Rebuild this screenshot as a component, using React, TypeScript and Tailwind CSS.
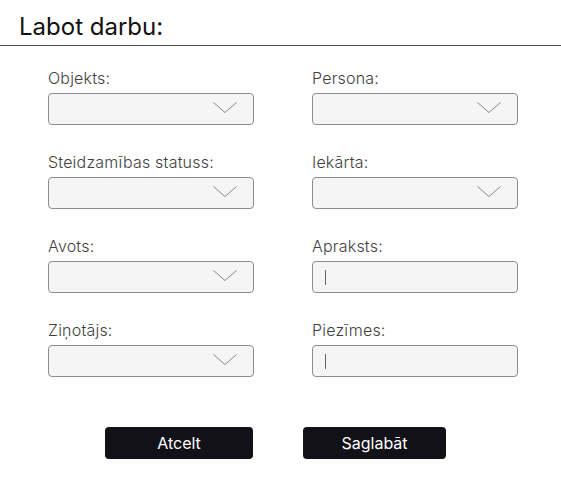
import React from 'react';

const fields = [
  { label: 'Objekts:', kind: 'select' },
  { label: 'Persona:', kind: 'select' },
  { label: 'Steidzamības statuss:', kind: 'select' },
  { label: 'Iekārta:', kind: 'select' },
  { label: 'Avots:', kind: 'select' },
  { label: 'Apraksts:', kind: 'text' },
  { label: 'Ziņotājs:', kind: 'select' },
  { label: 'Piezīmes:', kind: 'text' },
];

function Chevron() {
  return (
    <svg width="24" height="12" viewBox="0 0 24 12" className="mr-[16px] mt-[-2px]">
      <polyline points="0.5,0.5 12,10.5 23.5,0.5" fill="none" stroke="#7a7a7a" strokeWidth="0.9" />
    </svg>
  );
}

function Field({ label, kind }: { label: string; kind: string }) {
  return (
    <div className="flex flex-col">
      <label className="text-[16px] leading-[19px] font-light tracking-[0.2px] text-[#3f3f3f]">{label}</label>
      <div className="mt-[5px] h-[32px] w-[206px] rounded-[4px] border border-[#8c8c8c] bg-[#f5f5f5] flex items-center">
        {kind === 'select' ? (
          <div className="flex-1 flex justify-end">
            <Chevron />
          </div>
        ) : (
          <div className="ml-[12px] w-px h-[15px] bg-[#666]" />
        )}
      </div>
    </div>
  );
}

export default function App() {
  return (
    <div className="w-[561px] h-[490px] bg-white font-['Inter',sans-serif] text-[#111]">
      <div className="h-[46px] border-b border-[#4d4d4d]">
        <h1 className="pl-[19px] pt-[12px] text-[24px] leading-[29px] font-normal">Labot darbu:</h1>
      </div>

      <div className="grid grid-cols-[206px_206px] gap-x-[58px] gap-y-[28px] pl-[48px] pt-[23px]">
        {fields.map(f => (
          <Field key={f.label} label={f.label} kind={f.kind} />
        ))}
      </div>

      <div className="flex gap-[50px] pl-[105px] pt-[50px]">
        <button className="w-[148px] h-[32px] rounded-[4px] bg-[#111117] text-white text-[16px] font-normal">
          Atcelt
        </button>
        <button className="w-[143px] h-[32px] rounded-[4px] bg-[#111117] text-white text-[16px] font-normal">
          Saglabāt
        </button>
      </div>
    </div>
  );
}
